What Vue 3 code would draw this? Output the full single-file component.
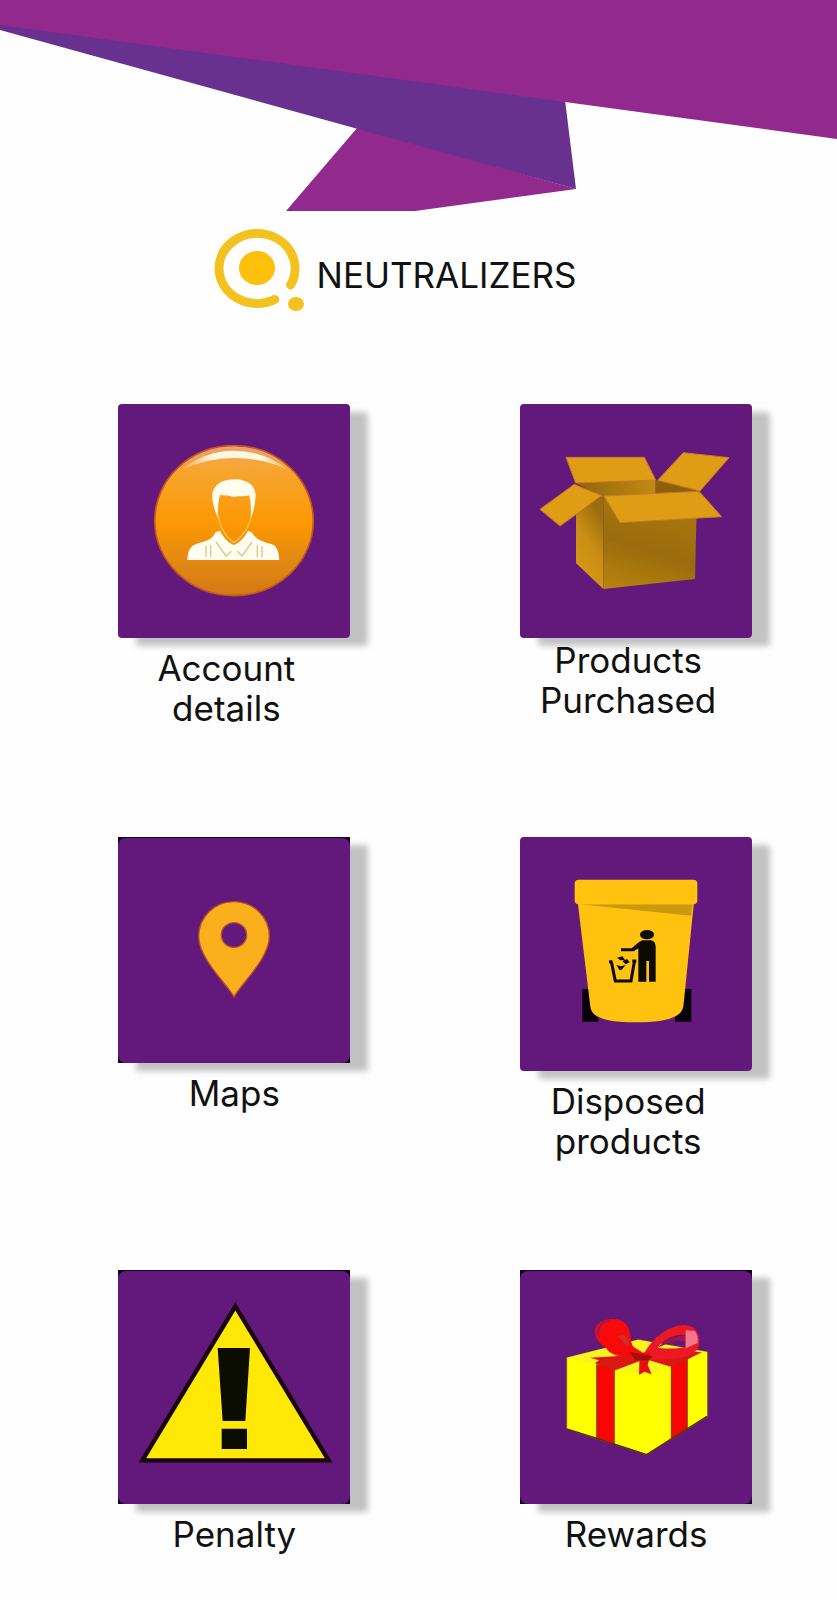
<script setup>
const items = [
  { id: 'account', label: ['Account', 'details'], tile: 'rounded', box: '40 42 696 702' },
  { id: 'products', label: ['Products', 'Purchased'], tile: 'rounded', snug: true, box: '45 42 696 702' },
  { id: 'maps', label: ['Maps'], tile: 'framed', box: '40 39 696 675' },
  { id: 'disposed', label: ['Disposed', 'products'], tile: 'rounded', box: '45 36 696 702' },
  { id: 'penalty', label: ['Penalty'], tile: 'framed', box: '40 34 696 699' },
  { id: 'rewards', label: ['Rewards'], tile: 'framed', box: '45 34 696 699' },
]
</script>

<template>
  <div class="page">
    <header>
      <svg class="banner" viewBox="0 0 837 211" aria-hidden="true">
        <path d="M358 127 286 211H415L576 189Z" fill="#92298d" />
        <path d="M0 24V30L358 129 576 189 565 100Z" fill="#68308f" />
        <path d="M0 0H837V139L565 102 0 25Z" fill="#92298d" />
      </svg>
      <div class="brand">
        <svg class="logo" viewBox="0 0 92 82" aria-hidden="true">
          <path d="M61.8 70.4A38 35 0 1 1 77.6 55.9" fill="none" stroke="#f4c21f" stroke-width="9" stroke-linecap="round" />
          <ellipse cx="44" cy="39" rx="18" ry="17" fill="#fdc00b" />
          <ellipse cx="83" cy="75" rx="8" ry="7" fill="#f4c21f" />
        </svg>
        <h1>NEUTRALIZERS</h1>
      </div>
    </header>

    <nav class="grid" aria-label="Main menu">
      <a v-for="item in items" :key="item.id" class="item" :href="'#' + item.id">
        <span class="tile" :class="item.tile">
          <svg class="art" :viewBox="item.box" aria-hidden="true">
            <g v-if="item.id === 'account'">
              <defs>
                <linearGradient id="orb" x1="0" y1="0" x2="0" y2="1">
                  <stop offset="0" stop-color="#f0a85a" />
                  <stop offset=".16" stop-color="#f7a531" />
                  <stop offset=".52" stop-color="#fc9802" />
                  <stop offset=".75" stop-color="#e58a12" />
                  <stop offset="1" stop-color="#d17a14" />
                </linearGradient>
                <linearGradient id="gloss" x1="0" y1="0" x2="1" y2="0">
                  <stop offset="0" stop-color="#fff3cf" stop-opacity=".1" />
                  <stop offset=".3" stop-color="#fff7df" />
                  <stop offset=".75" stop-color="#fff7df" />
                  <stop offset="1" stop-color="#fff3cf" stop-opacity=".3" />
                </linearGradient>
              </defs>
              <ellipse cx="388" cy="392" rx="238" ry="225" fill="url(#orb)" stroke="#c2551f" stroke-width="5" />
              <path d="M238 224Q302 170 388 170T538 224Q470 186 388 186T238 224Z" fill="#eda06b" />
              <path d="M230 240Q300 182 388 182T548 238Q470 204 388 204T230 240Z" fill="url(#gloss)" />
              <path d="M340 386C328 354 321 334 323 310C329 282 354 268 390 268C430 268 453 288 453 318C451 347 447 364 438 386C440 354 438 332 433 316C414 322 400 316 388 321C370 314 360 320 346 314C341 334 339 354 340 386Z" fill="#fffdf0" />
              <path d="M341 375C343 408 362 440 388 458C414 440 437 408 439 375" fill="none" stroke="#ffc54e" stroke-width="4" />
              <path d="M248 510C250 482 256 468 275 462C298 454 322 452 333 426L346 422C356 442 370 457 388 465C405 457 420 442 430 422L443 428C453 450 480 456 500 462C518 468 522 484 524 510Z" fill="#fffdf0" />
              <path d="M334 456 364 498 380 484M398 484 412 498 442 456M304 468V502M318 466V502M458 466V502M472 468V502" fill="none" stroke="#dcc58f" stroke-width="4" />
            </g>

            <g v-else-if="item.id === 'products'">
              <defs>
                <linearGradient id="front" x1="0" y1="1" x2=".3" y2="0">
                  <stop offset="0" stop-color="#ba840e" />
                  <stop offset=".5" stop-color="#9a6c0c" />
                  <stop offset="1" stop-color="#a8770e" />
                </linearGradient>
                <linearGradient id="side" x1="0" y1="1" x2=".4" y2="0">
                  <stop offset="0" stop-color="#d99a14" />
                  <stop offset=".6" stop-color="#c98f13" />
                  <stop offset="1" stop-color="#9c6d0c" />
                </linearGradient>
                <linearGradient id="inner" x1="0" y1="0" x2="1" y2="0">
                  <stop offset="0" stop-color="#8e640c" />
                  <stop offset="1" stop-color="#c48a12" />
                </linearGradient>
              </defs>
              <path d="M208 276 452 268V312L290 322Z" fill="url(#inner)" />
              <path d="M452 270 585 303 560 312H452Z" fill="#8d610b" />
              <path d="M213 372 295 316V597L213 520Z" fill="url(#side)" />
              <path d="M295 318 576 310 570 567 295 597Z" fill="url(#front)" />
              <g fill="#df9d15" stroke="#c9782a" stroke-width="3">
                <path d="M183 202H418L452 270 212 279Z" />
                <path d="M535 188 672 203 585 303 458 271Z" />
                <path d="M208 283 290 317 165 408 105 358Z" />
                <path d="M297 318 582 304 650 380 345 398Z" />
              </g>
            </g>

            <g v-else-if="item.id === 'maps'">
              <path fill-rule="evenodd" d="M388 516C370 480 282 402 282 334A106 104 0 0 1 494 334C494 402 406 480 388 516ZM388 293A38 37 0 1 0 388 367A38 37 0 1 0 388 293Z" fill="#f9b01c" stroke="#b5502b" stroke-width="4" />
            </g>

            <g v-else-if="item.id === 'disposed'">
              <path d="M232 492H280V590H232ZM510 492H559V590H510Z" fill="#060208" />
              <path d="M218 230 256 545C260 580 310 592 392 592C475 592 528 580 535 545L567 230Z" fill="#ffc30f" />
              <path d="M225 238H563L558 272Z" fill="#c99a0d" />
              <rect x="209" y="164" width="368" height="74" rx="12" fill="#ffc30f" />
              <ellipse cx="426" cy="329" rx="21" ry="14" fill="#0d0a02" />
              <path d="M412 346H438Q452 348 452 366V470H432V408H424V470H400V370L386 379H348V370H380L402 351Z" fill="#0d0a02" />
              <path d="M312 410H322M382 408H394M319 410 331 468H378L388 410" fill="none" stroke="#0d0a02" stroke-width="9" />
              <path d="M336 398 352 394 360 404 346 406ZM352 408 366 402 374 412 362 418ZM334 420 348 424 362 420 350 434 344 436Z" fill="#0d0a02" />
            </g>

            <g v-else-if="item.id === 'penalty'">
              <path d="M392 140 113 602H672Z" fill="#ffe806" stroke="#19050d" stroke-width="13" />
              <path d="M339 265H436L422 484H354ZM351 507H427V568H351Z" fill="#0b0c02" />
            </g>

            <g v-else>
              <path d="M185 294 400 240 608 277V470L425 585 185 508Z" fill="#ff0" stroke="#8a5a2c" stroke-width="3" />
              <path d="M185 294 400 240 608 277 422 345Z" fill="#fbf222" />
              <path d="M276 316 327 328V553L276 536ZM500 316 546 300V508L500 537Z" fill="#fa0505" stroke="#b02d0a" stroke-width="5" />
              <path d="M185 508 276 536 327 553 425 585 500 537 606 470" fill="none" stroke="#5b3010" stroke-width="4" />
              <path d="M255 294 330 290 400 280 500 270 590 278 546 300 500 322 420 298 325 334 270 310 282 302Z" fill="#d91812" />
              <path d="M404 290C360 294 318 292 304 266C278 250 262 222 274 200C290 176 340 170 362 192C382 214 372 244 386 262L412 278Z" fill="#f90a0a" />
              <path d="M280 232C268 206 288 180 318 182C286 190 280 208 284 238Z" fill="#862056" />
              <path d="M338 228C350 240 360 250 370 262C374 246 368 232 352 226Z" fill="#c4342c" />
              <path d="M416 284C444 232 490 198 538 196C574 198 590 228 580 262C568 292 510 302 430 300ZM458 264C484 268 516 268 540 262V226C510 222 478 238 458 264Z" fill="#ec1823" fill-rule="evenodd" />
              <path d="M458 264C480 240 508 228 540 228V244C510 242 488 250 458 264Z" fill="#9c174d" />
              <path d="M542 212 570 214Q580 230 578 250L542 266Z" fill="#f3768c" />
              <path d="M404 284 438 282 428 316 440 344 418 336 402 346Z" fill="#e60d0d" />
              <path d="M372 276 402 282 444 290 430 302 392 302Z" fill="#a40c10" />
            </g>
          </svg>
        </span>
        <span class="label" :class="{ snug: item.snug, double: item.label.length > 1 }">
          <span v-for="line in item.label" :key="line" class="line">{{ line }}</span>
        </span>
      </a>
    </nav>
  </div>
</template>

<style>
body {
  margin: 0;
  background: #fefefe;
}
</style>

<style scoped>
.page {
  overflow: hidden;
  color: #111;
  font-family: Inter, "Liberation Sans", sans-serif;
}

.banner {
  display: block;
  width: 100%;
  height: auto;
}

.brand {
  display: flex;
  align-items: center;
  justify-content: center;
  gap: 12px;
  padding: 18px 48px 0 0;
}

.logo {
  width: 92px;
  height: 82px;
}

h1 {
  margin: 10px 0 0;
  font-size: 35px;
  line-height: 40px;
  font-weight: 400;
}

.grid {
  display: grid;
  grid-template-columns: 1fr 1fr;
  grid-auto-rows: minmax(330px, auto);
  row-gap: 103px;
  padding: 93px 0 0 4%;
}

.item {
  display: flex;
  flex-direction: column;
  align-items: center;
  color: inherit;
  text-decoration: none;
}

.tile {
  display: block;
  width: 232px;
  box-shadow: 18px 8px 6px #c2c2c2;
}

.rounded {
  border-radius: 4px;
}

.framed {
  padding-top: 1px;
  background: #12041f;
}

.art {
  display: block;
  width: 100%;
  height: auto;
  background: #63197c;
  border-radius: 4px;
}

.framed .art {
  border-radius: 8px;
}

.label {
  display: flex;
  flex-direction: column;
  padding-top: 10px;
  font-size: 35px;
  line-height: 40px;
  text-align: center;
}

.label.double {
  padding-right: 16px;
}

.label.snug {
  padding-top: 2px;
}
</style>
